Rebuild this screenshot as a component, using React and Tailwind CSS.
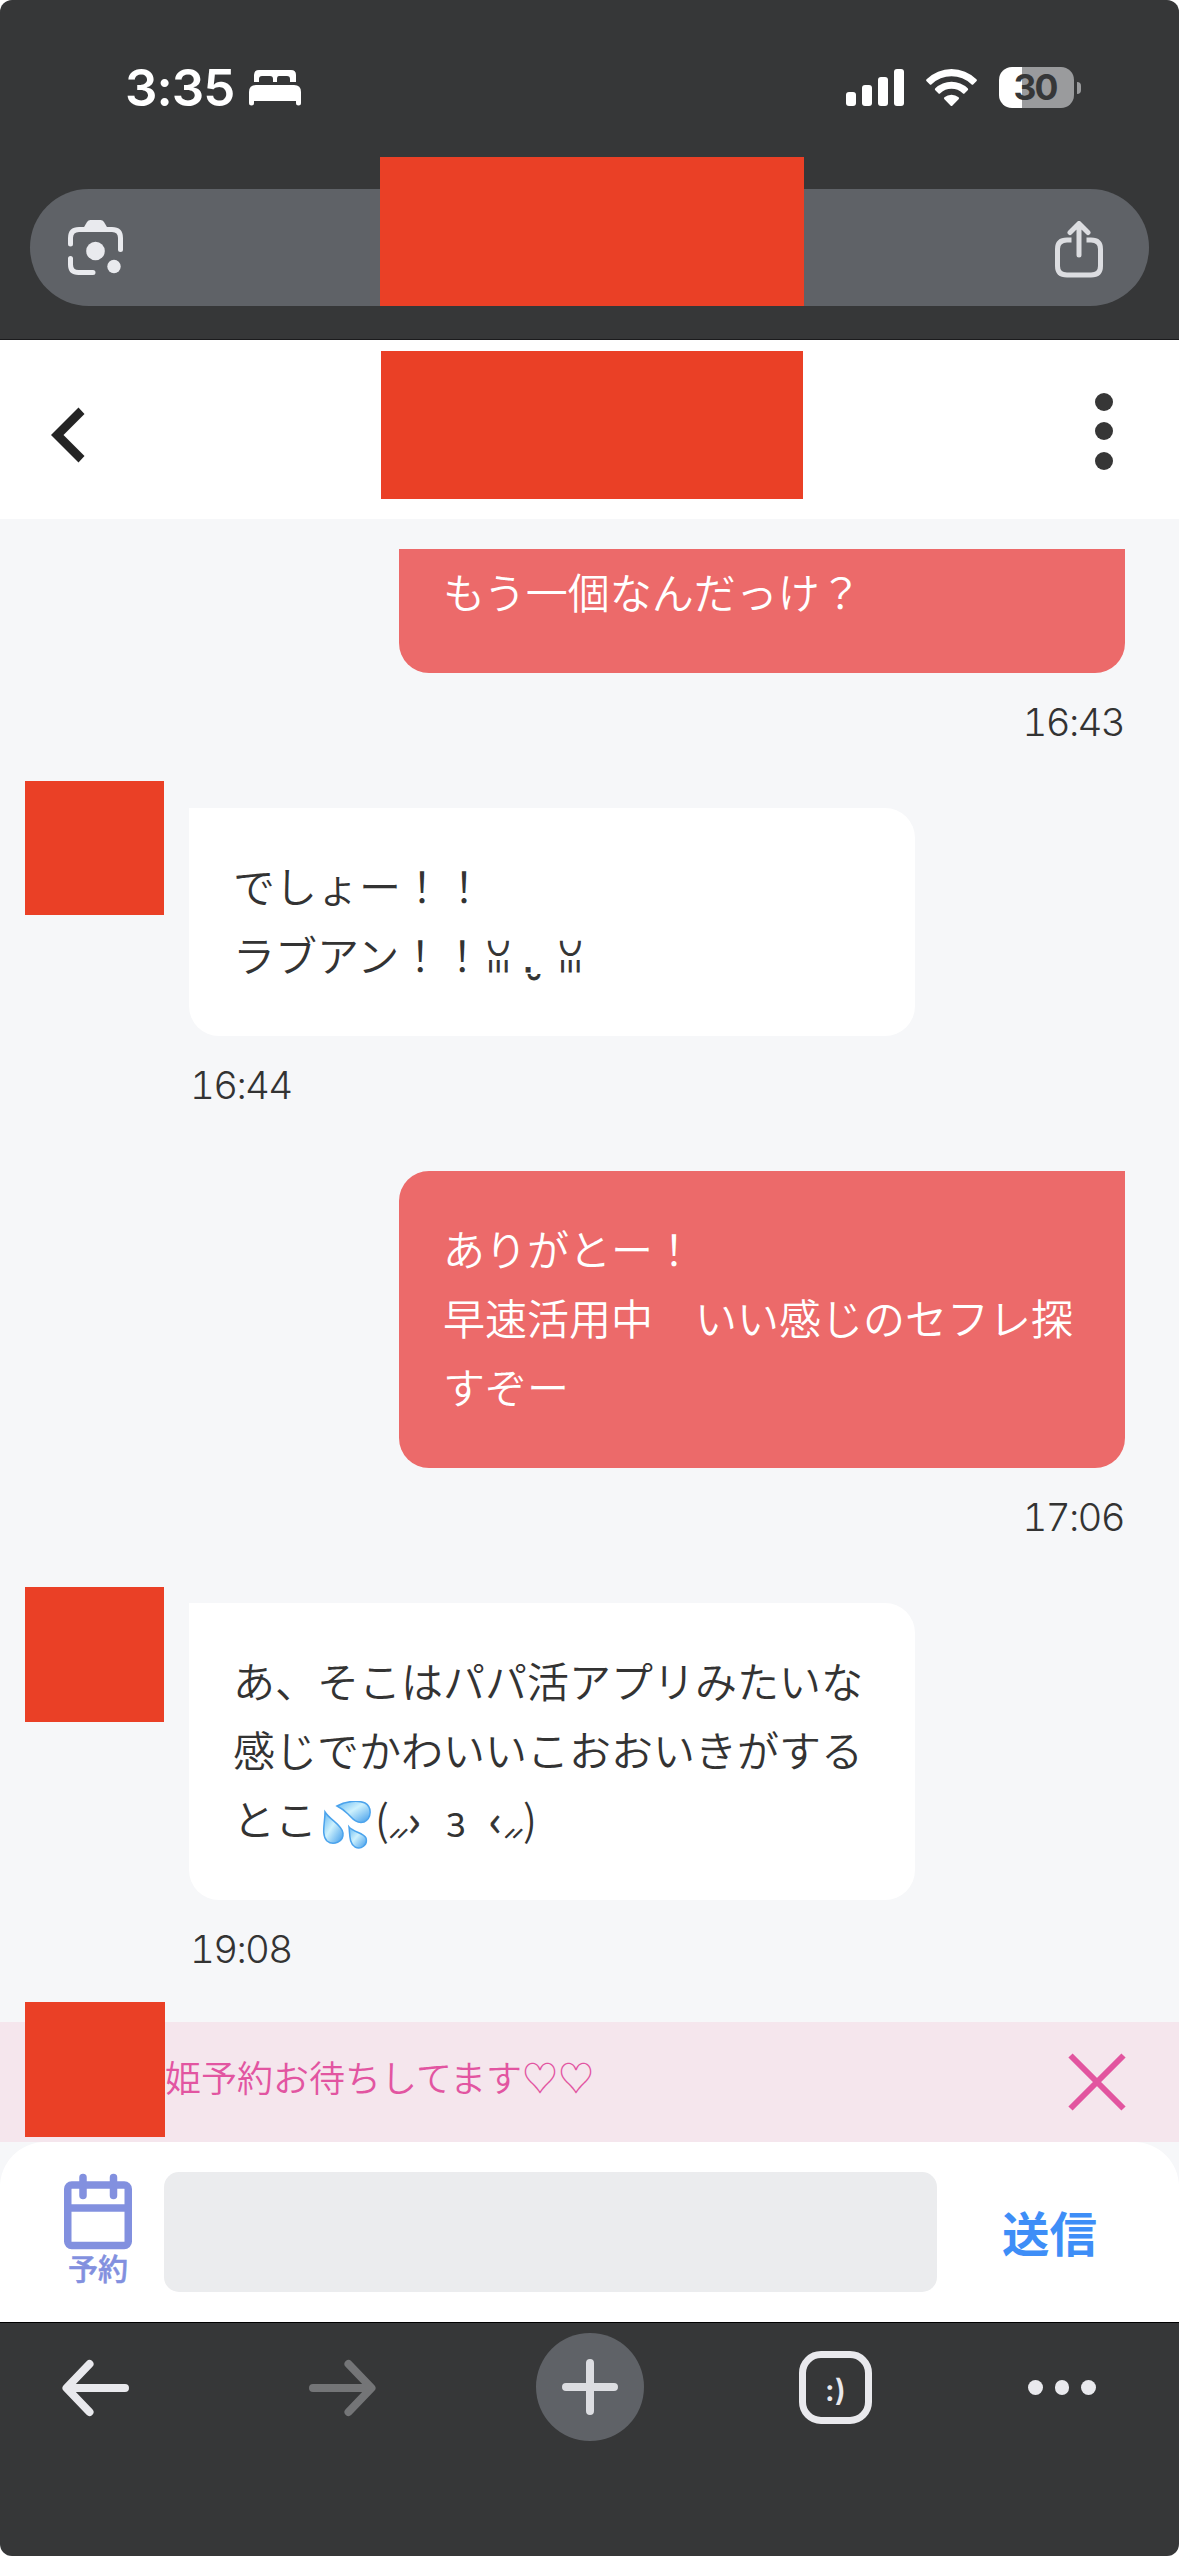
const JP = "font-['Noto_Sans_CJK_JP',sans-serif]";

function StatusBar() {
  return (
    <div className="flex h-[189px] items-start justify-between pr-[98px] pl-[125px] pt-[67px] text-white">
      <div className="flex items-center">
        <span className="h-[41px] w-[112px] font-['Inter',sans-serif] text-[51px] leading-[42px] font-semibold tracking-[-1px] whitespace-nowrap">3:35</span>
        <svg className="ml-[12px] h-[36px] w-[52px]" viewBox="0 0 52 36" fill="currentColor">
          <path d="M5 12V5q0-5 5-5h32q5 0 5 5v7h-6V9q0-3-3-3H30q-2 0-2 3v3h-4V9q0-3-3-3h-8q-3 0-3 3v3z" />
          <path d="M0 22q0-7 7-7h38q7 0 7 7v11q0 2.500-2.500 2.500T47 33v-2H5v2q0 2.500-2.500 2.500T0 33z" />
        </svg>
      </div>
      <div className="flex items-center">
        <svg className="h-[38px] w-[58px]" viewBox="0 0 58 38" fill="currentColor">
          <rect x="0" y="23" width="10" height="14" rx="3" />
          <rect x="16" y="16" width="10" height="21" rx="3" />
          <rect x="32" y="8" width="10" height="29" rx="3" />
          <rect x="48" y="0" width="10" height="37" rx="3" />
        </svg>
        <svg className="ml-[22px] h-[38px] w-[51px]" viewBox="0 0 51 38" fill="currentColor">
          <path d="M.6 10.300a35.500 35.500 0 0 1 49.800 0q1 1 0 2l-3 3q-1 1-2 0a28.500 28.500 0 0 0-39.800 0q-1 1-2 0l-3-3q-1-1 0-2z" />
          <path d="M9.300 19.200a23.500 23.500 0 0 1 32.400 0q1 1 0 2l-3 3q-1 1-2 0a16.500 16.500 0 0 0-22.400 0q-1 1-2 0l-3-3q-1-1 0-2z" />
          <path d="M18.400 28.300a11 11 0 0 1 14.200 0q1 1 0 2l-6.100 6.200q-1 1-2 0l-6.100-6.200q-1-1 0-2z" />
        </svg>
        <div className="ml-[22px] flex h-[41px] w-[75px] items-center justify-center rounded-[13px] bg-[linear-gradient(to_right,#fff_23px,#9a9b9d_23px)]">
          <span className="mr-[3px] font-['Inter',sans-serif] text-[35.500px] leading-[41px] font-bold tracking-[-2px] text-[#363738]">30</span>
        </div>
        <div className="ml-[3px] h-[12px] w-[4px] rounded-r-full bg-[#9a9b9d]" />
      </div>
    </div>
  );
}

function AddressBar() {
  return (
    <div className="relative mx-[30px] flex h-[117px] items-center justify-between rounded-full bg-[#5f6267] pr-[46px] pl-[38px]">
      <svg className="h-[56px] w-[55px]" viewBox="0 0 55 56" fill="none" stroke="#e9eaee" strokeWidth="5" strokeLinecap="round">
        <path d="M2.500 24V18q0-8.500 8.500-8.500h33q8.500 0 8.500 8.500v11.500M2.500 38.500v6q0 8 8 8H25" />
        <path d="M15.500 8l3.500-6q1.200-2 3.500-2h10q2.300 0 3.500 2l3.500 6z" fill="#e9eaee" stroke="none" />
        <circle cx="27.500" cy="31" r="9.300" fill="#e9eaee" stroke="none" />
        <circle cx="46" cy="46.500" r="6.700" fill="#e9eaee" stroke="none" />
      </svg>
      <svg className="mt-[3px] h-[57px] w-[48px]" viewBox="0 0 48 57" fill="none" stroke="#dcdde1" strokeWidth="5" strokeLinecap="round" strokeLinejoin="round">
        <path d="M16.500 19H12q-9.500 0-9.500 9v17q0 9 9.500 9h24q9.500 0 9.500-9V28q0-9-9.500-9h-4.500" strokeLinecap="butt" />
        <path d="M24 34V3M15 11.500l9-9 9 9" />
      </svg>
      <div className="absolute bottom-0 left-[350px] h-[149px] w-[424px] bg-[#ea4026]" />
    </div>
  );
}

function ChatHeader() {
  return (
    <header className="flex h-[179px] items-center bg-white pr-[66px] pl-[51px]">
      <svg className="mt-[10px] h-[56px] w-[34px]" viewBox="0 0 34 56" fill="#242424">
        <path d="M27.500 0.500l6 6.500L12.500 28l21 21-6 6.500L0 28z" />
      </svg>
      <div className="mt-[-9px] ml-[296px] h-[148px] w-[422px] bg-[#ea4026]" />
      <div className="mt-[3px] ml-auto flex flex-col gap-[11.500px]">
        <span className="size-[18px] rounded-full bg-[#363636]" />
        <span className="size-[18px] rounded-full bg-[#363636]" />
        <span className="size-[18px] rounded-full bg-[#363636]" />
      </div>
    </header>
  );
}

function Time({ children, right }) {
  return (
    <div className={`h-[135px] pt-[25px] font-['Inter',sans-serif] text-[38.500px] leading-[48px] font-[330] tracking-[-1.7px] tabular-nums text-[#333] ${right ? "pr-px text-right" : "pl-px text-left"}`}>
      {children}
    </div>
  );
}

function Sent({ time, children, clipped }) {
  return (
    <div className="ml-[399px] w-[726px]">
      <div className={`bg-[#ec6a6a] px-[44px] pb-[48px] text-[42px] leading-[69px] font-[350] whitespace-nowrap text-white ${clipped ? "rounded-b-[30px] pt-[7px]" : "rounded-[30px] rounded-tr-none pt-[42px]"} ${JP}`}>
        {children}
      </div>
      <Time right>{time}</Time>
    </div>
  );
}

function Received({ time, children, avatar }) {
  return (
    <div className="flex pl-[25px]">
      <div className={`${avatar} w-[139px] shrink-0 bg-[#ea4026]`} />
      <div className="ml-[25px] w-[726px]">
        <div className={`rounded-[30px] rounded-tl-none bg-white px-[44px] pt-[42px] pb-[48px] text-[42px] leading-[69px] font-[350] whitespace-nowrap text-[#333] ${JP}`}>
          {children}
        </div>
        <Time>{time}</Time>
      </div>
    </div>
  );
}

function Sweat() {
  return (
    <svg className="ml-[5px] inline-block h-[48px] w-[50px] align-[-13px]" viewBox="0 0 50 48" role="img" aria-label="💦">
      <defs>
        <linearGradient id="drop" x1="0" y1="0" x2="1" y2="1">
          <stop offset="0" stopColor="#63b7f2" />
          <stop offset=".45" stopColor="#cdf1fd" />
          <stop offset="1" stopColor="#3f9bea" />
        </linearGradient>
      </defs>
      <g fill="url(#drop)" stroke="#4ba3ec" strokeWidth="1.500">
        <path d="M15 5C24 0 36-1 43 2C50 6 50 17 42 21C34 23 30 17 26 13Q21 8 15 5z" />
        <path d="M3 11C3 22-1 34 5 40C11 45 22 41 21 32C20 24 8 19 3 11z" />
        <path d="M27 26C28 34 27 42 33 46C39 49 46 44 44 37C42 32 31 31 27 26z" />
      </g>
    </svg>
  );
}

function Blush() {
  return <span className="inline-block w-[19px] text-[23px] leading-none tracking-[-4px] [-webkit-text-stroke:1px_#333]">⸝⸝</span>;
}

function SleepyFace() {
  return (
    <span className="leading-none">
      <span className="ml-[2px] inline-block w-[37px] text-[35px] leading-none [-webkit-text-stroke:1px_#333]">ꈍ</span>
      <span className="inline-block w-[35px] text-[42px] leading-none [-webkit-text-stroke:0.800px_#333]"> .̮ </span>
      <span className="text-[35px] [-webkit-text-stroke:1px_#333]">ꈍ</span>
    </span>
  );
}

function PoutFace() {
  return (
    <span className="leading-none">
      <span className="inline-block w-[17px] text-right leading-none">(</span>
      <Blush />
      <span className="inline-block w-[26px] leading-none [-webkit-text-stroke:0.800px_#333]">›</span>
      <span className="inline-block w-[43px] text-center text-[40px] leading-none"> з </span>
      <span className="ml-[12px] inline-block w-[15px] leading-none [-webkit-text-stroke:0.800px_#333]">‹</span>
      <Blush />
      <span className="leading-none">)</span>
    </span>
  );
}

function Banner() {
  return (
    <div className="flex h-[120px] items-center bg-[#f5e6ed] pr-[53px] pl-[25px]">
      <div className="mt-[-25px] h-[135px] w-[140px] shrink-0 bg-[#ea4026]" />
      <span className={`mt-[-12px] text-[36px] leading-[54px] font-[350] whitespace-nowrap text-[#e255a1] ${JP}`}>姫予約お待ちしてます♡♡</span>
      <svg className="ml-auto h-[58px] w-[58px]" viewBox="0 0 58 58" stroke="#e2559f" strokeWidth="6">
        <path d="M2.500 2.500l53 53M55.500 2.500l-53 53" />
      </svg>
    </div>
  );
}

function Composer() {
  return (
    <div className="flex h-[180px] rounded-t-[45px] bg-white pt-[30px]">
      <div className="flex w-[164px] flex-col items-center pr-[32px] pl-[64px] pt-px">
        <svg className="h-[77px] w-[68px] shrink-0" viewBox="0 0 68 77" fill="none" stroke="#8290df" strokeWidth="7.500">
          <rect x="3.750" y="12" width="60.500" height="60.500" rx="4" />
          <path d="M4 35h60" />
          <path d="M19 4.500v18M49.500 4.500v18" strokeLinecap="round" />
        </svg>
        <span className={`text-[30px] leading-[34px] font-medium whitespace-nowrap text-[#8290df] [-webkit-text-stroke:0.500px_#8290df] ${JP}`}>予約</span>
      </div>
      <div className="h-[120px] w-[773px] rounded-[15px] bg-[#ebecee]" />
      <span className={`ml-[65px] text-[47.500px] leading-[119px] font-bold text-[#3e8ef7] ${JP}`}>送信</span>
    </div>
  );
}

function BrowserToolbar() {
  return (
    <div className="flex h-[234px] items-start border-t border-black bg-[#363738] pt-[10px] pl-[62px]">
      <svg className="mt-[26px] h-[58px] w-[68px]" viewBox="0 0 68 58" fill="none" stroke="#e9e9ed" strokeWidth="8" strokeLinecap="round" strokeLinejoin="round">
        <path d="M63 29H5M27.500 5L4.500 29l23 24" />
      </svg>
      <svg className="mt-[26px] ml-[179px] h-[58px] w-[68px]" viewBox="0 0 68 58" fill="none" stroke="#747577" strokeWidth="8" strokeLinecap="round" strokeLinejoin="round">
        <path d="M4 29h58M39.500 5l23 24-23 24" />
      </svg>
      <div className="ml-[159px] flex size-[108px] items-center justify-center rounded-full bg-[#5f6267]">
        <svg className="size-[56px]" viewBox="0 0 56 56" stroke="#dcdde1" strokeWidth="8" strokeLinecap="round">
          <path d="M28 4v48M4 28h48" />
        </svg>
      </div>
      <div className="mt-[18px] ml-[155px] flex size-[73px] items-center justify-center rounded-[22px] border-[7px] border-[#e9e9ed]">
        <span className="mt-[5px] font-['Inter',sans-serif] text-[30px] leading-[40px] font-semibold text-[#e9e9ed]">:)</span>
      </div>
      <div className="mt-[47px] ml-[156px] flex gap-[12px]">
        <span className="size-[14.500px] rounded-full bg-[#e9e9ed]" />
        <span className="size-[14.500px] rounded-full bg-[#e9e9ed]" />
        <span className="size-[14.500px] rounded-full bg-[#e9e9ed]" />
      </div>
    </div>
  );
}

export default function App() {
  return (
    <div className="bg-white">
      <div className="flex h-[2556px] w-[1179px] flex-col overflow-hidden rounded-[12px] bg-[#f6f7f9]">
        <div className="h-[340px] shrink-0 border-b border-[#1b1b1d] bg-[#363738]">
          <StatusBar />
          <AddressBar />
        </div>
        <ChatHeader />
        <main className="h-[1503px] shrink-0 pt-[30px]">
          <Sent time="16:43" clipped>もう一個なんだっけ？</Sent>
          <Received time="16:44" avatar="mt-[-27px] h-[134px]">
            でしょー！！<br />ラブアン！！<SleepyFace />
          </Received>
          <Sent time="17:06">
            ありがとー！<br />早速活用中　いい感じのセフレ探<br />すぞー
          </Sent>
          <Received time="19:08" avatar="mt-[-16px] h-[135px]">
            あ、そこはパパ活アプリみたいな<br />感じでかわいいこおおいきがする<br />とこ<Sweat /><PoutFace />
          </Received>
        </main>
        <Banner />
        <Composer />
        <BrowserToolbar />
      </div>
    </div>
  );
}
